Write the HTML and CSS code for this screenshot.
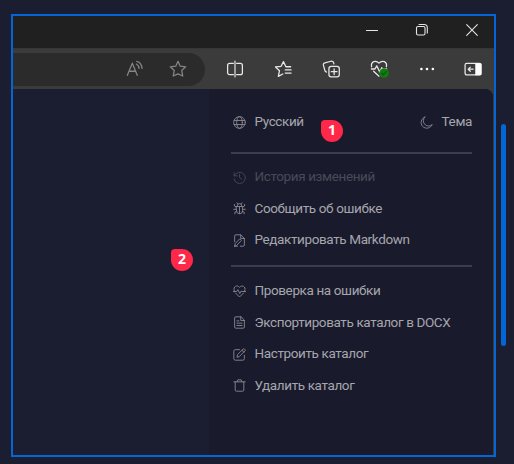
FILE: index.html
```html
<!DOCTYPE html>
<html lang="ru">
<head>
<meta charset="utf-8">
<title>Меню каталога</title>
<link rel="stylesheet" href="styles.css">
</head>
<body>
<div class="window">
  <div class="titlebar">
    <svg class="win-icon" viewBox="0 0 14 14"><path d="M1.500 7.500h11"/></svg>
    <svg class="win-icon" viewBox="0 0 14 14"><rect x="1.500" y="3.500" width="8.500" height="8.500" rx="1.500"/><path d="M4 1.500h5.500a2.800 2.800 0 0 1 2.800 2.800V10"/></svg>
    <svg class="win-icon" viewBox="0 0 14 14"><path d="M1.700 1.700l10.600 10.600M12.300 1.700L1.700 12.300"/></svg>
  </div>
  <div class="toolbar">
    <div class="address">
      <svg class="tool dim" viewBox="0 0 20 20"><path d="M1.500 17L7 3.500 12.500 17M3.500 12.500h7M11.500 4.500a6 6 0 0 1 3 4.800M12 1.500c3 .8 5.600 3.700 5.800 8"/></svg>
      <svg class="tool dim" viewBox="0 0 20 20"><path d="M10 1.500l2.500 5.400 6.100.7-4.500 4 1.200 6.200L10 15.500l-5.300 2.300 1.200-6.200-4.500-4 6.100-.7z"/></svg>
    </div>
    <div class="tools">
      <svg class="tool" viewBox="0 0 20 20"><path d="M8.200 3.700H4a2.200 2.200 0 0 0-2.200 2.200v8.200A2.200 2.200 0 0 0 4 16.300h4.200M11.800 3.700H16a2.200 2.200 0 0 1 2.200 2.200v8.200a2.200 2.200 0 0 1-2.200 2.200h-4.200"/><path class="bar" d="M10 1.500v17"/></svg>
      <svg class="tool" viewBox="0 0 20 20"><path d="M18.500 7.500h-5.300L10.500 1.800 7.900 7 1.700 7.700l4.400 4.200-1.300 6.300 5-2.700M12.500 11h6.500M12.500 14.500h6.500"/></svg>
      <svg class="tool" viewBox="0 0 20 20"><rect x="7.700" y="7.200" width="11.500" height="11.500" rx="2.500"/><path d="M13.500 9.800v6.400M10.300 13h6.400M5 13.500A3 3 0 0 1 3 11L1.500 5.500a2 2 0 0 1 1.700-2.400l6.800-1.700a2.500 2.500 0 0 1 3 2l.2 1"/></svg>
      <svg class="tool" viewBox="0 0 20 20"><path d="M1.800 7.500C.5 1.800 6.500-.5 10 3.500 13.500-.5 19.500 1.800 18.200 7.500M1.500 10h4l2-3.500L11 13.500l2-5 1 1.500h4.500M4 12.500l6 5.500"/><circle class="status" cx="15.700" cy="14.500" r="5.300"/><path class="check" d="M13 14.700l1.700 1.700 3.300-3.600"/></svg>
      <svg class="tool" viewBox="0 0 20 20"><g class="solid"><circle cx="3.800" cy="10" r="1.450"/><circle cx="10" cy="10" r="1.450"/><circle cx="16.500" cy="10" r="1.450"/></g></svg>
      <svg class="tool last" viewBox="0 0 20 20"><rect x="1.200" y="3.800" width="17.600" height="12.800" rx="1.800"/><path class="solid" d="M12.500 3.500H18a1.500 1.500 0 0 1 1.500 1.500v10.500A1.500 1.500 0 0 1 18 17h-5.500z"/><path d="M10.200 10.200H4.700M7 7.900l-2.300 2.300L7 12.500"/></svg>
    </div>
  </div>
  <div class="content">
    <div class="menu">
      <div class="row">
        <div class="item"><svg viewBox="0 0 16 16"><circle cx="8" cy="8" r="7.200"/><ellipse cx="8" cy="8" rx="3.500" ry="7.200"/><path d="M1.500 5.500h13M1.500 10.500h13"/></svg><span>Русский</span></div>
        <div class="item"><svg viewBox="0 0 16 16"><path d="M6 1.200A7.100 7.100 0 1 0 15 10.500 5.300 5.300 0 0 1 6 1.200z"/></svg><span>Тема</span></div>
      </div>
      <div class="divider"></div>
      <div class="group">
        <div class="item off"><svg viewBox="0 0 16 16"><path d="M1.300 2v4h4M1.700 5.700a7 7 0 1 1-.5 3.800M8 4v4.200l2.700 1.800"/></svg><span>История изменений</span></div>
        <div class="item"><svg viewBox="0 0 16 16"><path d="M4.200 5.500h7.600V10.500a3.800 4 0 0 1-7.600 0zM5.500 5.500V4a2.500 2 0 0 1 5 0v1.500M8 6v8M4.200 6L1.800 5V3M11.800 6l2.400-1V3M4.200 9H.8M11.800 9h3.400M4.500 11.500l-2.200 1v2M11.500 11.500l2.200 1v2M5.800 2.300L4.800 1M10.200 2.300l1-1.300"/></svg><span>Сообщить об ошибке</span></div>
        <div class="item"><svg viewBox="0 0 16 16"><path d="M2 9.500V2.500A1.500 1.500 0 0 1 3.500 1H9.500l4.500 4.500v8a1.500 1.500 0 0 1-1.500 1.500H9M9.500 1v4.500H14M2 15l.8-3.500L8.300 6l2 2-5.500 5.700zM2 15h3.500"/></svg><span>Редактировать Markdown</span></div>
      </div>
      <div class="divider"></div>
      <div class="group second">
        <div class="item"><svg viewBox="0 0 16 16"><path d="M1.500 7C-.5 1.500 5.500-.5 8 3 10.500-.5 16.500 1.500 14.500 7M3 9.800l5 5 5-5M.5 8h4L6 5.700l2.300 4.800 1.700-3 1 .5h4.500"/></svg><span>Проверка на ошибки</span></div>
        <div class="item"><svg viewBox="0 0 16 16"><path d="M9.500 1h-6A1.500 1.500 0 0 0 2 2.500v11A1.500 1.500 0 0 0 3.500 15h9a1.500 1.500 0 0 0 1.500-1.500v-8zM9.500 1v4.500H14M4.800 6h2.500M4.800 8.800h6.400M4.800 11.700h6.400"/></svg><span>Экспортировать каталог в DOCX</span></div>
        <div class="item"><svg viewBox="0 0 16 16"><path d="M8 2H3a2 2 0 0 0-2 2v9a2 2 0 0 0 2 2h9a2 2 0 0 0 2-2V9M5 11l.7-3L12.500 1.200a1 1 0 0 1 1.500 0l.8.8a1 1 0 0 1 0 1.500L8 10.300zM11 2.700L13.300 5"/></svg><span>Настроить каталог</span></div>
        <div class="item"><svg viewBox="0 0 16 16"><path d="M1 3.500h14M5 3.500l1-2.500h4l1 2.500M2.700 3.500v10A1.500 1.500 0 0 0 4.200 15h7.600a1.500 1.500 0 0 0 1.500-1.500v-10"/></svg><span>Удалить каталог</span></div>
      </div>
    </div>
  </div>
</div>
<div class="scroll-thumb"></div>
<div class="badge one">1</div>
<div class="badge two">2</div>
</body>
</html>
```
FILE: styles.css
```css
* { box-sizing: border-box; }
body {
  margin: 0;
  width: 514px;
  height: 464px;
  overflow: hidden;
  display: flex;
  gap: 5px;
  padding: 14px 0 0 11px;
  background: #1a1e30;
  font-family: Roboto, "Liberation Sans", sans-serif;
}
svg { fill: none; stroke: currentColor; flex: none; stroke-linecap: round; stroke-linejoin: round; }
.window {
  width: 485px;
  height: 443px;
  border: 2px solid #0465d7;
  display: flex;
  flex-direction: column;
  background: #3b3b3b;
}
.titlebar {
  height: 32px;
  flex: none;
  background: #202020;
  display: flex;
  justify-content: flex-end;
  align-items: center;
  gap: 36px;
  padding: 0 15px 4px 0;
  color: #e4e4e4;
}
.win-icon { width: 14px; height: 14px; stroke-width: 1.1; }
.toolbar {
  height: 41px;
  flex: none;
  display: flex;
  align-items: center;
  border-top: 1px solid #363636;
  color: #e8e8e8;
}
.address {
  width: 192px;
  height: 33px;
  border-radius: 0 17px 17px 0;
  background: #2b2b2b;
  display: flex;
  align-items: center;
  justify-content: flex-end;
  gap: 25px;
  padding-right: 18px;
}
.tool { width: 18px; height: 18px; stroke-width: 1.4; overflow: visible; }
.last { margin-left: -2px; }
.dim { color: #858585; }
.bar { stroke: #aaa; stroke-width: 2; }
.solid { fill: #fff; stroke: none; }
.status { fill: #107c10; stroke: none; }
.check { stroke: #0a4f0a; stroke-width: 1.2; }
.tools { display: flex; gap: 30px; margin-left: 21px; }
.content {
  flex: 1;
  margin-right: 1px;
  border-top-right-radius: 8px;
  overflow: hidden;
  background: #1a1e30;
  display: flex;
  justify-content: flex-end;
}
.menu {
  width: 284px;
  padding: 17px 21px 0 22px;
  background: #191a2c;
  color: #a6a6ac;
}
.row { display: flex; justify-content: space-between; height: 31px; margin-bottom: 15px; }
.row .item { height: 30px; }
.item {
  display: flex;
  align-items: center;
  height: 31.4px;
  gap: 8.5px;
  padding-left: 2px;
  font-size: 13.5px;
  letter-spacing: -0.38px;
  line-height: 18px;
  white-space: nowrap;
}
.item svg { width: 13px; height: 13px; stroke-width: 1.1; color: #8b8b94; position: relative; top: 1px; }
.item.off { color: #494a58; }
.item.off svg { color: #494a58; }
.divider { height: 2px; background: #3b3c51; }
.group { padding: 6.8px 0 9.7px; }
.second { padding-top: 8px; }
.scroll-thumb { width: 5px; height: 222px; margin-top: 110px; border-radius: 3px; background: #0465d7; }
.badge {
  position: absolute;
  width: 22px;
  height: 22px;
  border-radius: 4px 11px 11px 11px;
  background: #ff2848;
  color: #fff;
  font: 700 14px/20px "Open Sans", sans-serif;
  text-align: center;
}
.one { left: 321px; top: 120px; }
.two { left: 171px; top: 249px; }
```
